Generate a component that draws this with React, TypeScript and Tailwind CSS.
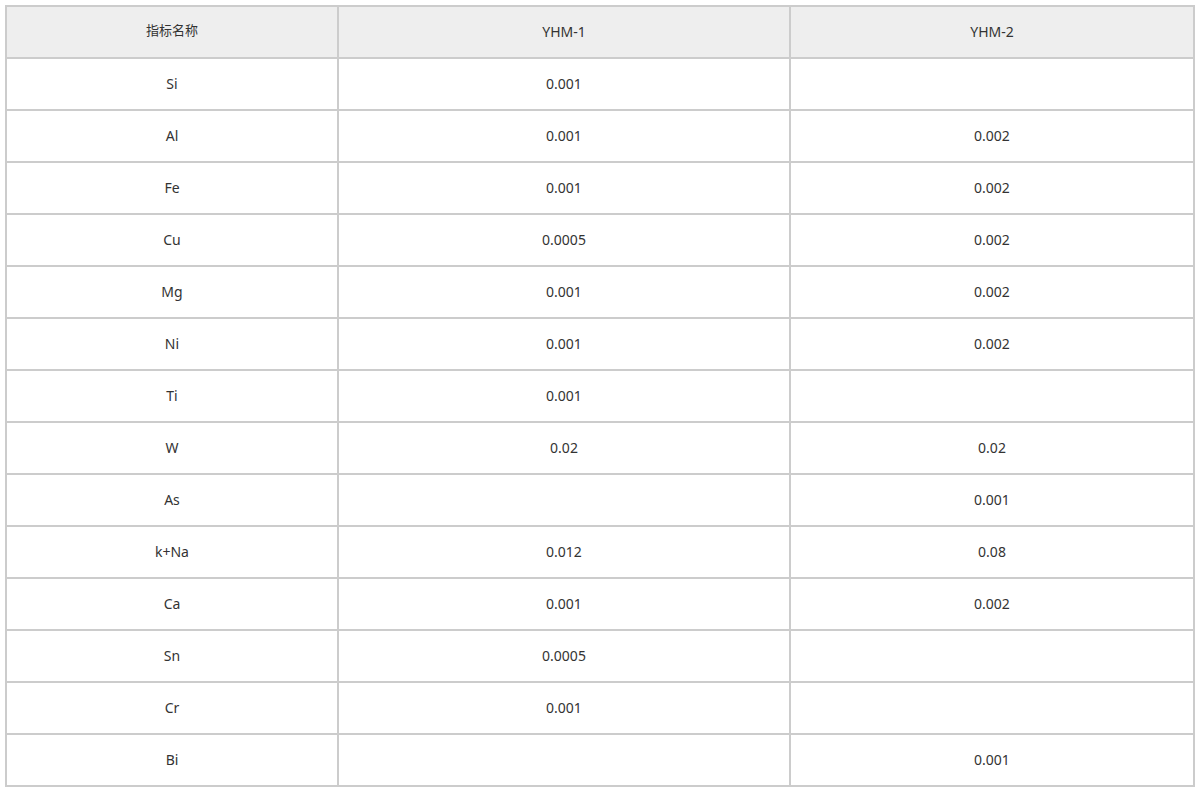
const rows: [string, string, string][] = [
  ["Si", "0.001", ""],
  ["Al", "0.001", "0.002"],
  ["Fe", "0.001", "0.002"],
  ["Cu", "0.0005", "0.002"],
  ["Mg", "0.001", "0.002"],
  ["Ni", "0.001", "0.002"],
  ["Ti", "0.001", ""],
  ["W", "0.02", "0.02"],
  ["As", "", "0.001"],
  ["k+Na", "0.012", "0.08"],
  ["Ca", "0.001", "0.002"],
  ["Sn", "0.0005", ""],
  ["Cr", "0.001", ""],
  ["Bi", "", "0.001"],
];

const cell =
  "h-[52px] pb-[2px] flex items-center justify-center border-r-2 border-b-2 border-[#cccccc]";

const App = () => {
  return (
    <div className="bg-white min-h-[792px] pt-[5px] pl-[5px]">
      <div
        className="w-[1190px] grid grid-cols-[332px_452px_404px] border-l-2 border-t-2 border-[#cccccc] text-[14px] text-[#333333]"
        style={{fontFamily: '"Noto Sans", "Noto Sans CJK SC", sans-serif'}}
      >
        {/* header */}
        <div className={`${cell} bg-[#eeeeee] text-[13px]`}>指标名称</div>
        <div className={`${cell} bg-[#eeeeee]`}>YHM-1</div>
        <div className={`${cell} bg-[#eeeeee]`}>YHM-2</div>

        {rows.map((r) => (
          <div key={r[0]} className="contents">
            <div className={cell}>{r[0]}</div>
            <div className={cell}>{r[1]}</div>
            <div className={cell}>{r[2]}</div>
          </div>
        ))}
      </div>
    </div>
  );
};

export default App;
